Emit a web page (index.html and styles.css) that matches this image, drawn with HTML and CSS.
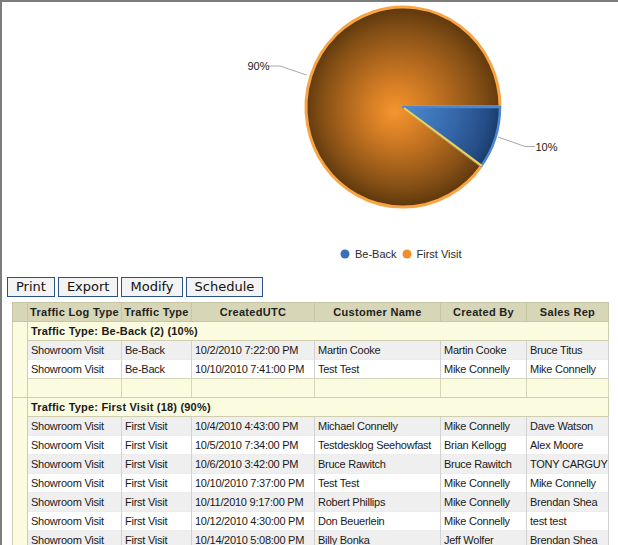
FILE: index.html
```html
<!DOCTYPE html>
<html>
<head>
<meta charset="utf-8">
<title>Traffic Log</title>
<link rel="stylesheet" href="styles.css">
</head>
<body>
<div class="frame">
  <div class="chart">
    <svg width="616" height="275" viewBox="2 2 616 275" xmlns="http://www.w3.org/2000/svg">
      <defs>
        <radialGradient id="og" cx="403" cy="107" r="99" gradientUnits="userSpaceOnUse" fx="394" fy="112">
          <stop offset="0" stop-color="#f4952f"/>
          <stop offset="0.22" stop-color="#dc8226"/>
          <stop offset="0.5" stop-color="#b46a1e"/>
          <stop offset="0.8" stop-color="#844f15"/>
          <stop offset="1" stop-color="#5f380d"/>
        </radialGradient>
        <radialGradient id="bg" cx="403" cy="107" r="99" gradientUnits="userSpaceOnUse">
          <stop offset="0" stop-color="#4d8ad0"/>
          <stop offset="0.55" stop-color="#3466a8"/>
          <stop offset="0.85" stop-color="#254d86"/>
          <stop offset="1" stop-color="#183a68"/>
        </radialGradient>
      </defs>
      <path d="M403,107 L481.5,165.8 A97,100 0 1,1 500,107 Z" fill="url(#og)" stroke="#f8a443" stroke-width="3" stroke-linejoin="round"/>
      <path d="M403,107 L500,107 A97,100 0 0,1 481.5,165.8 Z" fill="url(#bg)" stroke="#4d88ce" stroke-width="2.5" stroke-linejoin="round"/>
      <line x1="404" y1="108" x2="482" y2="166" stroke="#f3d247" stroke-width="2"/>
      <polyline points="268,66 280,66 306.5,75" fill="none" stroke="#a8a8a8" stroke-width="1"/>
      <polyline points="498,137 525,146.5 535,146.5" fill="none" stroke="#a8a8a8" stroke-width="1"/>
      <text x="247.5" y="70" class="lbl">90%</text>
      <text x="535.5" y="150.5" class="lbl">10%</text>
      <circle cx="345" cy="254" r="4.5" fill="#3a70b8"/>
      <text x="355" y="258" class="leg">Be-Back</text>
      <circle cx="407" cy="254" r="4.5" fill="#ef8f2c"/>
      <text x="416.5" y="258" class="leg">First Visit</text>
    </svg>
  </div>
  <div class="toolbar">
    <button class="btn">Print</button>
    <button class="btn">Export</button>
    <button class="btn">Modify</button>
    <button class="btn">Schedule</button>
  </div>
  <table class="grid">
    <colgroup>
      <col class="c0"><col class="c1"><col class="c2"><col class="c3"><col class="c4"><col class="c5"><col class="c6">
    </colgroup>
    <thead>
      <tr>
        <th class="indent-h"></th>
        <th>Traffic Log Type</th>
        <th>Traffic Type</th>
        <th>CreatedUTC</th>
        <th>Customer Name</th>
        <th>Created By</th>
        <th>Sales Rep</th>
      </tr>
    </thead>
    <tbody>
      <tr class="group">
        <td class="indent" rowspan="4"></td>
        <td colspan="6">Traffic Type: Be-Back (2) (10%)</td>
      </tr>
      <tr class="row alt">
        <td>Showroom Visit</td><td>Be-Back</td><td>10/2/2010 7:22:00 PM</td><td>Martin Cooke</td><td>Martin Cooke</td><td>Bruce Titus</td>
      </tr>
      <tr class="row">
        <td>Showroom Visit</td><td>Be-Back</td><td>10/10/2010 7:41:00 PM</td><td>Test Test</td><td>Mike Connelly</td><td>Mike Connelly</td>
      </tr>
      <tr class="footer">
        <td></td><td></td><td></td><td></td><td></td><td></td>
      </tr>
      <tr class="group">
        <td class="indent" rowspan="8"></td>
        <td colspan="6">Traffic Type: First Visit (18) (90%)</td>
      </tr>
      <tr class="row alt">
        <td>Showroom Visit</td><td>First Visit</td><td>10/4/2010 4:43:00 PM</td><td>Michael Connelly</td><td>Mike Connelly</td><td>Dave Watson</td>
      </tr>
      <tr class="row">
        <td>Showroom Visit</td><td>First Visit</td><td>10/5/2010 7:34:00 PM</td><td>Testdesklog Seehowfast</td><td>Brian Kellogg</td><td>Alex Moore</td>
      </tr>
      <tr class="row alt">
        <td>Showroom Visit</td><td>First Visit</td><td>10/6/2010 3:42:00 PM</td><td>Bruce Rawitch</td><td>Bruce Rawitch</td><td>TONY CARGUY</td>
      </tr>
      <tr class="row">
        <td>Showroom Visit</td><td>First Visit</td><td>10/10/2010 7:37:00 PM</td><td>Test Test</td><td>Mike Connelly</td><td>Mike Connelly</td>
      </tr>
      <tr class="row alt">
        <td>Showroom Visit</td><td>First Visit</td><td>10/11/2010 9:17:00 PM</td><td>Robert Phillips</td><td>Mike Connelly</td><td>Brendan Shea</td>
      </tr>
      <tr class="row">
        <td>Showroom Visit</td><td>First Visit</td><td>10/12/2010 4:30:00 PM</td><td>Don Beuerlein</td><td>Mike Connelly</td><td>test test</td>
      </tr>
      <tr class="row alt">
        <td>Showroom Visit</td><td>First Visit</td><td>10/14/2010 5:08:00 PM</td><td>Billy Bonka</td><td>Jeff Wolfer</td><td>Brendan Shea</td>
      </tr>
    </tbody>
  </table>
</div>
</body>
</html>
```

FILE: styles.css
```css
html, body {
  margin: 0;
  padding: 0;
  background: #fff;
  overflow: hidden;
}
body {
  font-family: "Liberation Sans", Arial, sans-serif;
  color: #1a1a1a;
}
.frame {
  border-top: 2px solid #7d7d7d;
  border-left: 2px solid #7d7d7d;
  min-height: 543px;
}
.chart {
  height: 275px;
}
.chart svg {
  display: block;
}
.lbl {
  font-family: "Liberation Sans", Arial, sans-serif;
  font-size: 11px;
  fill: #1a1a1a;
}
.leg {
  font-family: "Liberation Sans", Arial, sans-serif;
  font-size: 11px;
  fill: #2a2a2a;
}
.toolbar {
  display: flex;
  gap: 3px;
  padding-left: 5px;
  height: 20px;
  margin-bottom: 5px;
}
.btn {
  margin: 0;
  height: 20px;
  padding: 0 8px;
  border: 1px solid #2b5287;
  border-radius: 0;
  background: #f3f3f3;
  color: #111;
  font-family: "DejaVu Sans", Verdana, sans-serif;
  font-size: 13px;
  line-height: 18px;
}
.grid {
  margin-left: 10px;
  border-collapse: collapse;
  table-layout: fixed;
  width: 596px;
  font-size: 11px;
}
.c0 { width: 15px; }
.c1 { width: 94px; }
.c2 { width: 70px; }
.c3 { width: 123px; }
.c4 { width: 126px; }
.c5 { width: 86px; }
.c6 { width: 82px; }
.grid th {
  height: 18px;
  padding: 0;
  background: #d7d7b8;
  border: 1px solid #c6c6a6;
  border-left-color: #e4e4cc;
  font-weight: bold;
  font-size: 11px;
  letter-spacing: 0.3px;
  color: #222;
  text-align: center;
  white-space: nowrap;
  overflow: hidden;
}
.grid th.indent-h {
  border-left-color: #c6c6a6;
}
.grid td {
  height: 18px;
  padding: 0 0 0 3px;
  white-space: nowrap;
  overflow: hidden;
  line-height: 18px;
}
.grid td.indent {
  padding: 0;
  background: #fbfbdf;
  border: 1px solid #cfcfb0;
}
.group td {
  background: #fbfbdf;
  font-weight: bold;
  letter-spacing: 0.2px;
  color: #1a1a1a;
  border: 1px solid #cfcfb0;
}
.row td {
  background: #fff;
  letter-spacing: -0.25px;
  border-left: 1px solid #d2d2d2;
  border-right: 1px solid #d2d2d2;
  border-top: 1px solid #ececec;
}
.row.alt td {
  background: #efefef;
}
.footer td {
  background: #fbfbdf;
  border: 1px solid #d6d6bc;
  border-bottom-color: #cfcfb0;
}
```
